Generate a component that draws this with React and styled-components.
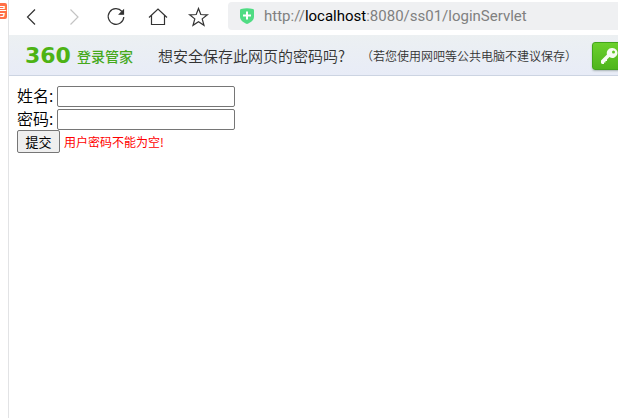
import React from "react";
import styled, { createGlobalStyle } from "styled-components";

const App = () => {
  return (
    <>
      <GlobalStyle />
      <Browser>
        <Gutter>
          <SideBadge>号</SideBadge>
        </Gutter>
        <Main>
          <Toolbar>
            <NavButtons>
              <NavButton aria-label="后退">
                <Icon viewBox="0 0 20 20">
                  <path d="M13 2.500 5.500 10l7.500 7.500" />
                </Icon>
              </NavButton>
              <NavButton aria-label="前进" disabled>
                <Icon viewBox="0 0 20 20">
                  <path d="M6.500 2.500 14 10l-7.500 7.500" />
                </Icon>
              </NavButton>
              <NavButton aria-label="刷新">
                <Icon viewBox="0 0 20 20">
                  <path d="M16 4.500A7.800 7.800 0 1 0 17.800 10" />
                  <path d="M17.500 3.200v4h-4z" fill="#333333" />
                </Icon>
              </NavButton>
              <NavButton aria-label="主页">
                <Icon viewBox="0 0 20 20">
                  <path d="M1 10.500 10 2l9 8.500M3.500 8.500v9h13v-9" />
                </Icon>
              </NavButton>
              <NavButton aria-label="收藏">
                <Icon viewBox="0 0 20 20">
                  <path d="m8.500 1.500 2.300 6 6.600.3-5.200 4.100 1.800 6.400-5.500-3.600L3 18.300l1.800-6.400L-.4 7.800l6.600-.3z" />
                </Icon>
              </NavButton>
            </NavButtons>
            <AddressBar>
              <Shield viewBox="0 0 14 16" aria-hidden="true">
                <path
                  d="M1 1Q7-.6 13 1q1 .3 1 1.300V8.500C14 12.500 10.500 14.500 7 16 3.500 14.500 0 12.500 0 8.500V2.300Q0 1.300 1 1z"
                  fill="#4fdc83"
                />
                <path d="M7 3.500v8M3 7.500h8" stroke="#ffffff" strokeWidth="2" />
              </Shield>
              <Url>
                http://<Host>localhost</Host>:8080/ss01/loginServlet
              </Url>
            </AddressBar>
          </Toolbar>
          <PasswordBar>
            <Brand>
              <BrandNumber>360</BrandNumber>
              登录管家
            </Brand>
            <Question>想安全保存此网页的密码吗?</Question>
            <Hint>（若您使用网吧等公共电脑不建议保存）</Hint>
            <SaveButton aria-label="保存密码">
              <KeyIcon viewBox="0 0 18 18">
                <path
                  fillRule="evenodd"
                  d="M12 1a5 5 0 0 0-5 6.500L1 13.500V16l1 1h2v-1.500h1.500V14H7v-1.500L9.500 10A5 5 0 1 0 12 1zm1.500 2.500a1.500 1.500 0 1 1 0 3 1.500 1.500 0 0 1 0-3z"
                />
              </KeyIcon>
            </SaveButton>
          </PasswordBar>
          <LoginForm onSubmit={(e) => e.preventDefault()}>
            <Field>
              <label htmlFor="name">姓名:</label>
              <TextInput id="name" type="text" />
            </Field>
            <Field>
              <label htmlFor="password">密码:</label>
              <TextInput id="password" type="password" />
            </Field>
            <Actions>
              <SubmitButton type="submit">提交</SubmitButton>
              <ErrorText>用户密码不能为空!</ErrorText>
            </Actions>
          </LoginForm>
        </Main>
      </Browser>
    </>
  );
};

const GlobalStyle = createGlobalStyle`
  * {
    box-sizing: border-box;
  }

  body {
    margin: 0;
    background: #ffffff;
    color: #000000;
    font-family: "Noto Sans CJK SC", sans-serif;
    font-weight: 350;
  }
`;

const Browser = styled.div`
  display: flex;
  min-height: 100vh;
  overflow: hidden;
`;

const Gutter = styled.aside`
  flex: none;
  width: 9px;
  padding-top: 3px;
  border-right: 1px solid #e2e3e5;
`;

const SideBadge = styled.div`
  display: flex;
  justify-content: flex-end;
  width: 7px;
  height: 16px;
  overflow: hidden;
  border-radius: 0 2px 2px 0;
  background: #ff6f47;
  color: #ffffff;
  font-size: 12px;
  font-weight: 500;
  line-height: 16px;
`;

const Main = styled.main`
  flex: 1;
  min-width: 0;
`;

const Toolbar = styled.header`
  display: flex;
  align-items: center;
  height: 35px;
  padding: 0 0 3px 13px;
`;

const NavButtons = styled.nav`
  display: flex;
  flex: none;
  gap: 22px;
  margin-right: 18px;
  padding-top: 2px;
`;

const NavButton = styled.button`
  display: flex;
  padding: 0;
  border: none;
  background: none;
  color: #333333;

  &:disabled {
    color: #c4c4c4;
  }
`;

const Icon = styled.svg`
  width: 20px;
  height: 20px;
  overflow: visible;
  fill: none;
  stroke: currentColor;
  stroke-width: 1.2;
`;

const AddressBar = styled.div`
  display: flex;
  flex: 1;
  align-items: center;
  gap: 10px;
  min-width: 0;
  height: 28px;
  padding-left: 12px;
  border-radius: 4px 0 0 4px;
  background: #eff0f2;
`;

const Shield = styled.svg`
  flex: none;
  width: 14px;
  height: 16px;
`;

const Url = styled.span`
  color: #808080;
  font-family: Roboto, sans-serif;
  font-size: 15px;
  font-weight: 400;
  line-height: 28px;
  white-space: nowrap;
`;

const Host = styled.span`
  color: #000000;
`;

const PasswordBar = styled.section`
  display: flex;
  align-items: center;
  height: 41px;
  padding: 2px 0 0 16px;
  overflow: hidden;
  border-bottom: 1px solid #ccd4e2;
  background: linear-gradient(#ecf0f2, #e8ecf7);
  color: #333333;
  white-space: nowrap;
`;

const Brand = styled.div`
  display: flex;
  flex: none;
  align-items: center;
  gap: 6px;
  width: 133px;
  color: #45a91c;
  font-size: 14px;
  font-weight: 500;
`;

const BrandNumber = styled.span`
  color: #4db314;
  font-family: "DejaVu Sans", sans-serif;
  font-size: 22px;
  font-weight: 700;
  line-height: 24px;
`;

const Question = styled.span`
  flex: none;
  width: 203px;
  font-size: 15px;
  line-height: 20px;
`;

const Hint = styled.span`
  flex: none;
  width: 231px;
  font-size: 12px;
  line-height: 20px;
`;

const SaveButton = styled.button`
  flex: none;
  width: 90px;
  height: 28px;
  padding: 0 7px;
  border: 1px solid #43a51b;
  border-radius: 3px;
  background: linear-gradient(#6bd02c, #4fb51c);
  box-shadow: 0 1px 2px #a9b4b4;
  text-align: left;
`;

const KeyIcon = styled.svg`
  display: block;
  width: 18px;
  height: 18px;
  fill: #f7fbf3;
`;

const LoginForm = styled.form`
  padding: 10px 8px;
`;

const Field = styled.div`
  display: flex;
  align-items: flex-start;
  gap: 4px;
  height: 23px;
  font-size: 16px;
  line-height: 18px;
`;

const TextInput = styled.input`
  width: 178px;
  height: 21px;
  padding: 1px 2px;
  border: 1px solid #767676;
  border-radius: 2px;
  background: #ffffff;
`;

const Actions = styled.div`
  display: flex;
  align-items: center;
  gap: 4px;
  margin-top: -2px;
`;

const SubmitButton = styled.button`
  width: 43px;
  height: 23px;
  padding: 0;
  border: 1px solid #767676;
  border-radius: 2px;
  background: #efefef;
  color: #000000;
  font-family: inherit;
  font-size: 13px;
  line-height: 20px;
`;

const ErrorText = styled.span`
  color: #ff0000;
  font-size: 12px;
  font-weight: 400;
  line-height: 20px;
`;

export default App;
